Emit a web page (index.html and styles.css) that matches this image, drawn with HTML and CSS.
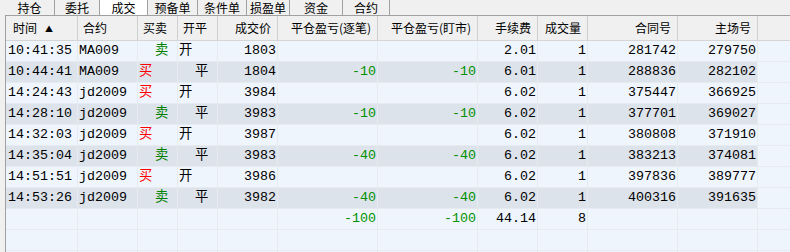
FILE: index.html
```html
<!DOCTYPE html>
<html lang="zh-CN">
<head>
	<meta charset="utf-8">
	<title>成交</title>
	<link rel="stylesheet" href="styles.css">
</head>
<body>
	<div class="tabs">
		<span class="tab">持仓</span>
		<span class="tab">委托</span>
		<span class="tab on">成交</span>
		<span class="tab">预备单</span>
		<span class="tab">条件单</span>
		<span class="tab">损盈单</span>
		<span class="tab">资金</span>
		<span class="tab">合约</span>
	</div>
	<div class="panel">
		<div class="row head">
			<div class="c l">时间<i class="arrow">▲</i></div>
			<div class="c l">合约</div>
			<div class="c l">买卖</div>
			<div class="c l">开平</div>
			<div class="c r">成交价</div>
			<div class="c r">平仓盈亏(逐笔)</div>
			<div class="c r">平仓盈亏(盯市)</div>
			<div class="c r">手续费</div>
			<div class="c r">成交量</div>
			<div class="c r">合同号</div>
			<div class="c r">主场号</div>
			<div class="c fill"></div>
		</div>
		<div class="row">
			<div class="c l">10:41:35</div><div class="c l">MA009</div><div class="c l sell">  卖</div><div class="c l">开</div>
			<div class="c r">1803</div><div class="c r loss"></div><div class="c r loss"></div><div class="c r">2.01</div>
			<div class="c r">1</div><div class="c r">281742</div><div class="c r">279750</div><div class="c fill"></div>
		</div>
		<div class="row alt">
			<div class="c l">10:44:41</div><div class="c l">MA009</div><div class="c l buy">买</div><div class="c l">  平</div>
			<div class="c r">1804</div><div class="c r loss">-10</div><div class="c r loss">-10</div><div class="c r">6.01</div>
			<div class="c r">1</div><div class="c r">288836</div><div class="c r">282102</div><div class="c fill"></div>
		</div>
		<div class="row">
			<div class="c l">14:24:43</div><div class="c l">jd2009</div><div class="c l buy">买</div><div class="c l">开</div>
			<div class="c r">3984</div><div class="c r loss"></div><div class="c r loss"></div><div class="c r">6.02</div>
			<div class="c r">1</div><div class="c r">375447</div><div class="c r">366925</div><div class="c fill"></div>
		</div>
		<div class="row alt">
			<div class="c l">14:28:10</div><div class="c l">jd2009</div><div class="c l sell">  卖</div><div class="c l">  平</div>
			<div class="c r">3983</div><div class="c r loss">-10</div><div class="c r loss">-10</div><div class="c r">6.02</div>
			<div class="c r">1</div><div class="c r">377701</div><div class="c r">369027</div><div class="c fill"></div>
		</div>
		<div class="row">
			<div class="c l">14:32:03</div><div class="c l">jd2009</div><div class="c l buy">买</div><div class="c l">开</div>
			<div class="c r">3987</div><div class="c r loss"></div><div class="c r loss"></div><div class="c r">6.02</div>
			<div class="c r">1</div><div class="c r">380808</div><div class="c r">371910</div><div class="c fill"></div>
		</div>
		<div class="row alt">
			<div class="c l">14:35:04</div><div class="c l">jd2009</div><div class="c l sell">  卖</div><div class="c l">  平</div>
			<div class="c r">3983</div><div class="c r loss">-40</div><div class="c r loss">-40</div><div class="c r">6.02</div>
			<div class="c r">1</div><div class="c r">383213</div><div class="c r">374081</div><div class="c fill"></div>
		</div>
		<div class="row">
			<div class="c l">14:51:51</div><div class="c l">jd2009</div><div class="c l buy">买</div><div class="c l">开</div>
			<div class="c r">3986</div><div class="c r loss"></div><div class="c r loss"></div><div class="c r">6.02</div>
			<div class="c r">1</div><div class="c r">397836</div><div class="c r">389777</div><div class="c fill"></div>
		</div>
		<div class="row alt">
			<div class="c l">14:53:26</div><div class="c l">jd2009</div><div class="c l sell">  卖</div><div class="c l">  平</div>
			<div class="c r">3982</div><div class="c r loss">-40</div><div class="c r loss">-40</div><div class="c r">6.02</div>
			<div class="c r">1</div><div class="c r">400316</div><div class="c r">391635</div><div class="c fill"></div>
		</div>
		<div class="row">
			<div class="c l"></div><div class="c l"></div><div class="c l"></div><div class="c l"></div>
			<div class="c r"></div><div class="c r loss">-100</div><div class="c r loss">-100</div><div class="c r">44.14</div>
			<div class="c r">8</div><div class="c r"></div><div class="c r"></div><div class="c fill"></div>
		</div>
		<div class="row">
			<div class="c"></div><div class="c"></div><div class="c"></div><div class="c"></div>
			<div class="c"></div><div class="c"></div><div class="c"></div><div class="c"></div>
			<div class="c"></div><div class="c"></div><div class="c"></div><div class="c fill"></div>
		</div>
		<div class="row">
			<div class="c"></div><div class="c"></div><div class="c"></div><div class="c"></div>
			<div class="c"></div><div class="c"></div><div class="c"></div><div class="c"></div>
			<div class="c"></div><div class="c"></div><div class="c"></div><div class="c fill"></div>
		</div>
	</div>
</body>
</html>
```

FILE: styles.css
```css
*{
	margin:0;
	padding:0;
	box-sizing:border-box;
}
html,body{
	width:790px;
	height:252px;
	overflow:hidden;
	background:#f0f0f0;
}
.tabs{
	display:flex;
	height:15px;
	padding-left:5px;
	font:12px/15px "Noto Sans CJK SC",sans-serif;
	color:#000;
}
.tab{
	text-align:center;
	border-right:1px solid #a0a0a0;
}
.tab:nth-child(1){width:50px;}
.tab:nth-child(2){width:45px;}
.tab:nth-child(3){width:48px;}
.tab:nth-child(4){width:50px;}
.tab:nth-child(5){width:49px;}
.tab:nth-child(6){width:43px;}
.tab:nth-child(7){width:53px;}
.tab:nth-child(8){width:47px;}
.tab.on{
	background:#fff;
}
.panel{
	margin-left:5px;
	border-left:1px solid #a0a0a0;
	border-top:1px solid #a0a0a0;
	background:#eff5fc;
	height:237px;
	overflow:hidden;
}
.row{
	display:grid;
	grid-template-columns:72px 60px 40px 40px 60px 100px 100px 60px 50px 90px 80px 1fr;
	height:21px;
	border-bottom:1px solid #e6ebf1;
	font:13.333px/20px "Liberation Mono","Noto Sans CJK SC",monospace;
	color:#000;
}
.c{
	border-right:1px solid #e6ebf1;
	white-space:pre;
	overflow:hidden;
}
.c.l{
	padding-left:1px;
}
.c.l:first-child{
	padding-left:2px;
}
.c.r{
	text-align:right;
	padding-right:1px;
}
.c.fill{
	border-right:none;
}
.alt .c{
	background:#dde3ea;
}
.alt .c.fill{
	background:none;
}
.sell{
	color:#008000;
}
.buy{
	color:#ff0000;
}
.loss{
	color:#009000;
}
.head{
	height:25px;
	background:#f0f0f0;
	border-bottom:1px solid #d5d5d5;
	font:12px/24px "Noto Sans CJK SC",sans-serif;
}
.head .c{
	border-right:1px solid #cfcfcf;
}
.head .c.l{
	padding-left:5px;
}
.head .c.l:first-child{
	padding-left:7px;
}
.head .c.r{
	padding-right:6px;
}
.head .c.fill{
	border-right:none;
}
.arrow{
	font-style:normal;
	font-size:8px;
	margin-left:8px;
	vertical-align:1px;
}
```
